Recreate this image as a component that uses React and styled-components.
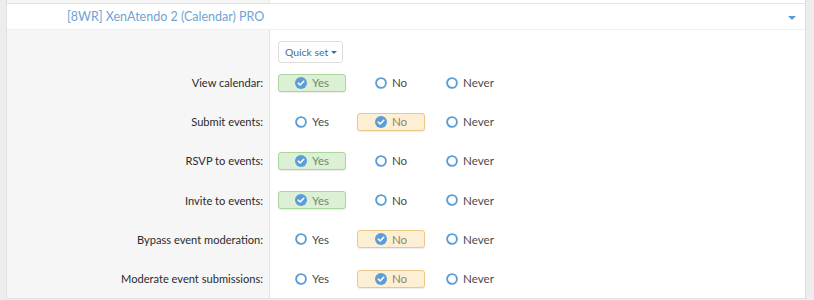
import React from "react";
import styled, { createGlobalStyle } from "styled-components";

const GlobalStyle = createGlobalStyle`
  body {
    margin: 0;
    background: #ededed;
    font-family: Lato, "Open Sans", sans-serif;
  }
`;

const Page = styled.div`
  padding: 0 8px 0 6px;
  height: 300px;
  overflow: hidden;
`;

const Panel = styled.div`
  background: #fff;
  border-left: 1px solid #e0e0e0;
  border-right: 1px solid #dcdcdc;
  border-bottom: 1px solid #e2e2e2;
`;

const PrevRow = styled.div`
  display: grid;
  grid-template-columns: 263px 1fr;
  height: 3px;
  border-bottom: 1px solid #e4e4e4;
`;

const PrevCell = styled.div`
  background: ${({ $gray }) => ($gray ? "#f6f6f6" : "#fff")};
  border-right: ${({ $gray }) => ($gray ? "1px solid #e6e6e6" : "none")};
`;

const Header = styled.div`
  display: flex;
  align-items: center;
  justify-content: space-between;
  height: 25px;
  padding: 0 9px 0 60px;
  border-bottom: 1px solid #efefef;
`;

const Title = styled.span`
  font-size: 12.5px;
  color: #6ea3d4;
`;

const Caret = styled.span`
  width: 0;
  height: 0;
  border-left: 4px solid transparent;
  border-right: 4px solid transparent;
  border-top: 4px solid #5d9bd4;
  margin-top: 2px;
`;

const Form = styled.div`
  display: grid;
  grid-template-columns: 263px 1fr;
`;

const Label = styled.div`
  display: flex;
  align-items: center;
  justify-content: flex-end;
  padding-right: 6px;
  background: #f6f6f6;
  border-right: 1px solid #e4e4e4;
  font-size: 11.1px;
  color: #2b2b2b;
  height: ${({ $h }) => $h || 39.2}px;
`;

const Controls = styled.div`
  display: flex;
  align-items: ${({ $top }) => ($top ? "flex-end" : "center")};
  padding-left: 8px;
  height: ${({ $h }) => $h || 39.2}px;
`;

const QuickSet = styled.button`
  display: inline-flex;
  align-items: center;
  gap: 3px;
  box-sizing: border-box;
  height: 22px;
  padding: 0 5px 0 6px;
  background: #fff;
  border: 1px solid #dcdcdc;
  border-radius: 3px;
  font-family: inherit;
  font-size: 10.4px;
  color: #3f6e93;
`;

const SmallCaret = styled(Caret)`
  border-width: 3px;
  border-top-width: 3.5px;
  border-top-color: #3f6e93;
  margin-top: 1px;
`;

const tones = {
  yes: { bg: "#dcf0d6", border: "#a9d79c", text: "#6f8a6a" },
  no: { bg: "#fdefd4", border: "#ecc788", text: "#8c8476" },
};

const Option = styled.label`
  display: inline-flex;
  align-items: center;
  justify-content: center;
  gap: 5px;
  box-sizing: border-box;
  width: 68px;
  height: 18px;
  margin-right: 11px;
  border-radius: 3px;
  font-size: 11.6px;
  color: ${({ $tone }) => ($tone ? tones[$tone].text : "#4a4a4a")};
  background: ${({ $tone }) => ($tone ? tones[$tone].bg : "transparent")};
  border: 1px solid ${({ $tone }) => ($tone ? tones[$tone].border : "transparent")};
  box-shadow: ${({ $tone }) => ($tone ? "0 1px 1px rgba(0,0,0,0.08)" : "none")};
`;

function Radio({ checked }) {
  return checked ? (
    <svg width="12" height="12" viewBox="0 0 12 12">
      <circle cx="6" cy="6" r="6" fill="#5b9dd6" />
      <path d="M3.3 6.2 L5.2 8 L8.7 4.3" fill="none" stroke="#fff" strokeWidth="1.6" strokeLinecap="round" strokeLinejoin="round" />
    </svg>
  ) : (
    <svg width="12" height="12" viewBox="0 0 12 12">
      <circle cx="6" cy="6" r="4.9" fill="#fff" stroke="#5b9dd6" strokeWidth="1.9" />
    </svg>
  );
}

const rows = [
  ["View calendar:", "yes"],
  ["Submit events:", "no"],
  ["RSVP to events:", "yes"],
  ["Invite to events:", "yes"],
  ["Bypass event moderation:", "no"],
  ["Moderate event submissions:", "no"],
];

const choices = [
  ["yes", "Yes"],
  ["no", "No"],
  ["never", "Never"],
];

export default function App() {
  return (
    <>
      <GlobalStyle />
      <Page>
        <Panel>
          <PrevRow>
            <PrevCell $gray />
            <PrevCell />
          </PrevRow>
          <Header>
            <Title>[8WR] XenAtendo 2 (Calendar) PRO</Title>
            <Caret />
          </Header>
          <Form>
            <Label $h={33} />
            <Controls $h={33} $top>
              <QuickSet>
                Quick set <SmallCaret />
              </QuickSet>
            </Controls>
            {rows.map(([label, value]) => (
              <React.Fragment key={label}>
                <Label>{label}</Label>
                <Controls>
                  {choices.map(([key, text]) => (
                    <Option key={key} $tone={value === key ? key : null}>
                      <Radio checked={value === key} />
                      {text}
                    </Option>
                  ))}
                </Controls>
              </React.Fragment>
            ))}
          </Form>
        </Panel>
      </Page>
    </>
  );
}
